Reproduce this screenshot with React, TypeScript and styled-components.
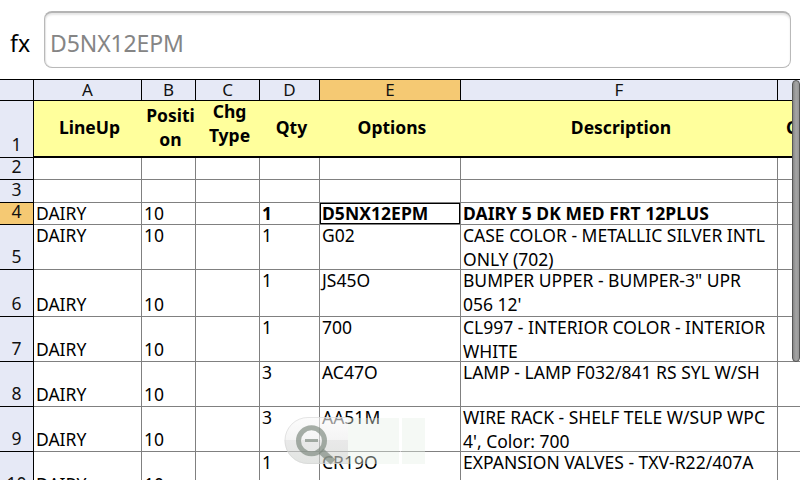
import React from 'react';
import styled, { createGlobalStyle } from 'styled-components';

const COLUMNS = '34px 108px 54px 64px 60px 141px 317px 64px';

const GlobalStyle = createGlobalStyle`
  * { box-sizing: border-box; }
  body {
    margin: 0;
    background: #fff;
    color: #000;
    font-family: "Noto Sans", "Open Sans", sans-serif;
    overflow: hidden;
  }
`;

const Screen = styled.main`
  position: relative;
  display: flex;
  flex-direction: column;
  width: 800px;
  height: 480px;
  overflow: hidden;
`;

const FormulaBar = styled.header`
  display: flex;
  flex: none;
  height: 79px;
  padding: 11px 9px 11px 10px;
`;

const FxLabel = styled.span`
  width: 34px;
  font-size: 23px;
  line-height: 32px;
  padding-top: 16px;
`;

const FormulaInput = styled.div`
  flex: 1;
  height: 57px;
  padding: 15px 0 0 5px;
  border: 1px solid #b9b9b9;
  border-top: 2px solid #b4b4b4;
  border-radius: 8px;
  box-shadow: inset 0 2px 2px #e6e6e6, inset 1px 0 1px #e4e4e4;
  color: #858585;
  font-size: 23px;
  line-height: 30px;
  letter-spacing: -0.1px;
`;

const Sheet = styled.section`
  flex: none;
  width: 842px;
  border-top: 1px solid #000;
`;

const SheetRow = styled.div<{ $height: number }>`
  display: grid;
  grid-template-columns: ${COLUMNS};
  grid-template-rows: ${(p) => p.$height}px;
`;

const HeadCell = styled.div<{ $active?: boolean }>`
  display: flex;
  justify-content: center;
  min-height: 0;
  border-right: 1px solid #000;
  border-bottom: 1px solid #000;
  background: ${(p) => (p.$active ? '#f5c973' : '#e6e9f6')};
  color: #111;
  font-size: 17px;
  line-height: 20px;
`;

const RowNumber = styled(HeadCell)`
  align-items: flex-end;
  padding-bottom: 1px;
  font-size: 17.5px;
  line-height: 24px;
`;

const TitleCell = styled.div<{ $start?: boolean }>`
  display: flex;
  align-items: center;
  justify-content: ${(p) => (p.$start ? 'flex-start' : 'center')};
  padding: 0 0 4px ${(p) => (p.$start ? 8 : 3)}px;
  min-height: 0;
  border-bottom: 2px solid #000;
  background: #ffff9c;
  font-size: 17.5px;
  font-weight: 700;
  line-height: 24px;
  text-align: center;
  white-space: pre;
`;

const TitleText = styled.span<{ $lift?: number }>`
  margin-bottom: ${(p) => p.$lift ?? 0}px;
`;

const Cell = styled.div<{ $bottom?: boolean; $bold?: boolean; $active?: boolean }>`
  display: flex;
  align-items: ${(p) => (p.$bottom ? 'flex-end' : 'flex-start')};
  min-height: 0;
  padding-left: 2px;
  border-right: 1px solid #808080;
  border-bottom: 1px solid #808080;
  font-size: 17.5px;
  font-weight: ${(p) => (p.$bold ? 700 : 400)};
  letter-spacing: ${(p) => (p.$bold ? 0.05 : 0)}px;
  line-height: 24px;
  white-space: pre;
  ${(p) => p.$active && 'box-shadow: inset 0 0 0 1px #000;'}
`;

const CellText = styled.span<{ $bottom?: boolean }>`
  margin: ${(p) => (p.$bottom ? '0' : '-2px 0 0')};
`;

const ScrollThumb = styled.div`
  position: absolute;
  top: 80px;
  right: 0;
  width: 8px;
  height: 282px;
  border: 1px solid #565656;
  border-radius: 4px;
  background: linear-gradient(90deg, #858585, #a5a5a5 50%, #969696);
`;

const ZoomControl = styled.svg`
  position: absolute;
  left: 280px;
  top: 412px;
`;

const LETTERS = ['', 'A', 'B', 'C', 'D', 'E', 'F', ''];

const TITLES: { text: string; lift?: number; start?: boolean }[] = [
  { text: 'LineUp' },
  { text: 'Positi\non' },
  { text: 'Chg\nType', lift: 8 },
  { text: 'Qty' },
  { text: 'Options' },
  { text: 'Description' },
  { text: 'Color', start: true },
];

type Row = {
  n: number;
  height: number;
  cells: [string, string, string, string, string];
  bold?: boolean;
  low?: boolean;
};

const ROWS: Row[] = [
  { n: 2, height: 22, cells: ['', '', '', '', ''] },
  { n: 3, height: 23, cells: ['', '', '', '', ''] },
  { n: 4, height: 22, cells: ['DAIRY', '10', '1', 'D5NX12EPM', 'DAIRY 5 DK MED FRT 12PLUS'], bold: true },
  { n: 5, height: 45, cells: ['DAIRY', '10', '1', 'G02', 'CASE COLOR - METALLIC SILVER INTL\nONLY (702)'] },
  { n: 6, height: 47, cells: ['DAIRY', '10', '1', 'JS45O', 'BUMPER UPPER - BUMPER-3" UPR\n056 12\''], low: true },
  { n: 7, height: 45, cells: ['DAIRY', '10', '1', '700', 'CL997 - INTERIOR COLOR - INTERIOR\nWHITE'], low: true },
  { n: 8, height: 45, cells: ['DAIRY', '10', '3', 'AC47O', 'LAMP - LAMP F032/841 RS SYL W/SH'], low: true },
  { n: 9, height: 45, cells: ['DAIRY', '10', '3', 'AA51M', "WIRE RACK - SHELF TELE W/SUP WPC\n4', Color: 700"], low: true },
  { n: 10, height: 45, cells: ['DAIRY', '10', '1', 'CR19O', 'EXPANSION VALVES - TXV-R22/407A'], low: true },
];

function DataRow({ row }: { row: Row }) {
  const [lineUp, position, qty, option, description] = row.cells;
  const selected = row.n === 4;
  return (
    <SheetRow $height={row.height}>
      <RowNumber $active={selected}>{row.n}</RowNumber>
      <Cell $bottom={row.low}><CellText $bottom={row.low}>{lineUp}</CellText></Cell>
      <Cell $bottom={row.low}><CellText $bottom={row.low}>{position}</CellText></Cell>
      <Cell />
      <Cell $bold={row.bold}><CellText>{qty}</CellText></Cell>
      <Cell $bold={row.bold} $active={selected}><CellText>{option}</CellText></Cell>
      <Cell $bold={row.bold}><CellText>{description}</CellText></Cell>
      <Cell />
    </SheetRow>
  );
}

export default function App() {
  return (
    <>
      <GlobalStyle />
      <Screen>
        <FormulaBar>
          <FxLabel>fx</FxLabel>
          <FormulaInput>D5NX12EPM</FormulaInput>
        </FormulaBar>
        <Sheet>
          <SheetRow $height={21}>
            {LETTERS.map((letter, i) => (
              <HeadCell key={i} $active={letter === 'E'}>{letter}</HeadCell>
            ))}
          </SheetRow>
          <SheetRow $height={57}>
            <RowNumber>1</RowNumber>
            {TITLES.map((t) => (
              <TitleCell key={t.text} $start={t.start}>
                <TitleText $lift={t.lift}>{t.text}</TitleText>
              </TitleCell>
            ))}
          </SheetRow>
          {ROWS.map((row) => <DataRow key={row.n} row={row} />)}
        </Sheet>
        <ZoomControl width="150" height="58" viewBox="280 412 150 58" fill="none">
          <defs>
            <linearGradient id="pill" x1="0" y1="417" x2="0" y2="464" gradientUnits="userSpaceOnUse">
              <stop offset="0" stopColor="#fafafa" stopOpacity=".6" />
              <stop offset=".48" stopColor="#ededed" stopOpacity=".6" />
              <stop offset=".5" stopColor="#dadada" stopOpacity=".6" />
              <stop offset="1" stopColor="#cfd3cf" stopOpacity=".6" />
            </linearGradient>
          </defs>
          <path d="M348 417H308A23.5 23.5 0 0 0 308 464H348Z" fill="url(#pill)" />
          <path d="M348 417.5H308A23 23 0 0 0 308 463.5H348" stroke="#d6d6d6" strokeOpacity=".6" />
          <path d="M348 418H399V464H348ZM402 418H425V464H402Z" fill="#e6efe7" fillOpacity=".4" />
          <path d="M400.5 418V464" stroke="#fff" strokeOpacity=".6" strokeWidth="2" />
          <g stroke="#7e897f" strokeOpacity=".68">
            <circle cx="311.5" cy="440.8" r="13" strokeWidth="5" />
            <path d="M305 440.5H318" strokeWidth="3" />
            <path d="M321 451L333 462" strokeWidth="7" />
          </g>
        </ZoomControl>
        <ScrollThumb />
      </Screen>
    </>
  );
}
